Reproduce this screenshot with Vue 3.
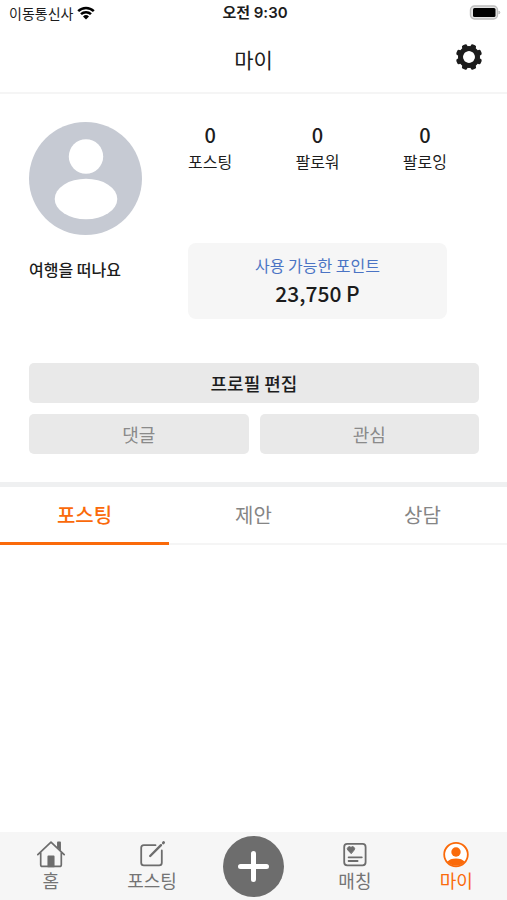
<script setup>
import { ref } from 'vue'

const stats = [
  { label: '포스팅', value: 0 },
  { label: '팔로워', value: 0 },
  { label: '팔로잉', value: 0 },
]
const tabs = ['포스팅', '제안', '상담']
const activeTab = ref('포스팅')
</script>

<template>
  <div class="screen">
    <div class="status">
      <div class="carrier">
        <span>이동통신사</span>
        <svg class="wifi" viewBox="0 0 18 14" aria-hidden="true">
          <path d="M1.2 5.2a11.2 11.2 0 0 1 15.6 0M4 8.2a7.2 7.2 0 0 1 10 0" fill="none" stroke="#000" stroke-width="2.5" />
          <path d="M9 13.6l-3-3.1a4.3 4.3 0 0 1 6 0z" fill="#000" />
        </svg>
      </div>
      <div class="clock">오전 9:30</div>
      <svg class="battery" viewBox="0 0 32 16" aria-hidden="true">
        <rect x="1.5" y="1" width="27" height="13" rx="4" fill="#e4e4e4" stroke="#bdbdbd" stroke-width="1.4" />
        <rect x="4" y="3" width="22.5" height="9" rx="1.5" fill="#000" />
        <path d="M30 6q1.6 1.5 0 3z" fill="#bdbdbd" stroke="#bdbdbd" />
      </svg>
    </div>

    <header class="header">
      <h1>마이</h1>
      <button class="settings" type="button" aria-label="설정">
        <svg viewBox="0 0 28 28" aria-hidden="true">
          <g fill="#1c1c1c">
            <rect v-for="n in 8" :key="n" x="11.2" y="0.8" width="5.6" height="7" rx="1.8" :transform="`rotate(${n * 45 + 22.5} 14 14)`" />
          </g>
          <circle cx="14" cy="14" r="8.5" fill="none" stroke="#1c1c1c" stroke-width="5" />
        </svg>
      </button>
    </header>

    <main>
      <section class="profile">
        <div class="person">
          <svg class="avatar" viewBox="0 0 113 113" aria-hidden="true">
            <circle cx="56.5" cy="56.5" r="56.5" fill="#c6cad3" />
            <circle cx="57" cy="34.5" r="17.2" fill="#fff" />
            <ellipse cx="57" cy="77" rx="31.3" ry="20.3" fill="#fff" />
          </svg>
          <p class="name">여행을 떠나요</p>
        </div>
        <div class="summary">
          <dl class="stats">
            <div v-for="stat in stats" :key="stat.label" class="stat">
              <dt>{{ stat.label }}</dt>
              <dd>{{ stat.value }}</dd>
            </div>
          </dl>
          <div class="points">
            <span class="points-label">사용 가능한 포인트</span>
            <strong class="points-value">23,750 P</strong>
          </div>
        </div>
      </section>

      <div class="actions">
        <button class="action edit" type="button">프로필 편집</button>
        <button class="action" type="button">댓글</button>
        <button class="action" type="button">관심</button>
      </div>

      <div class="tabs" role="tablist">
        <button
          v-for="tab in tabs"
          :key="tab"
          class="tab"
          :class="{ active: tab === activeTab }"
          type="button"
          role="tab"
          :aria-selected="tab === activeTab"
          @click="activeTab = tab"
        >{{ tab }}</button>
      </div>
    </main>

    <nav class="nav">
      <a class="item" href="#home">
        <svg viewBox="0 0 30 28" fill="none" stroke="#6d6d6d" stroke-width="1.7" stroke-linejoin="round" stroke-linecap="round" aria-hidden="true">
          <path d="M1.8 14.6L15 2.2l13.2 12.4M4.7 12.5v12.2q0 1.7 1.7 1.7h17.2q1.7 0 1.7-1.7V12.5" />
          <path d="M21.9 7.5V2.4h2.2v7.5" fill="#6d6d6d" />
          <path d="M12.3 16.4h5.4v10h-5.4z" fill="#6d6d6d" />
        </svg>
        <span>홈</span>
      </a>
      <a class="item" href="#posting">
        <svg viewBox="0 0 30 28" fill="none" stroke="#6d6d6d" stroke-width="1.8" stroke-linecap="round" stroke-linejoin="round" aria-hidden="true">
          <path d="M18.5 5.2H6.8q-2.6 0-2.6 2.6v15q0 2.6 2.6 2.6h15.4q2.6 0 2.6-2.6V10.5" />
          <path d="M13.2 16L24 5.2" stroke-width="2.4" />
          <path d="M26.3 2.9l.3-.3" stroke-width="2.8" />
        </svg>
        <span>포스팅</span>
      </a>
      <button class="add" type="button" aria-label="추가">
        <svg viewBox="0 0 61 61" aria-hidden="true">
          <circle cx="30.5" cy="30.5" r="30.5" fill="#6d6d6d" />
          <path d="M30.5 17.5v26M17.5 30.5h26" stroke="#fff" stroke-width="5" stroke-linecap="round" />
        </svg>
      </button>
      <a class="item" href="#matching">
        <svg viewBox="0 0 30 28" fill="none" stroke="#6d6d6d" stroke-width="1.8" stroke-linecap="round" aria-hidden="true">
          <rect x="4.2" y="3.9" width="21.4" height="21.4" rx="3" />
          <path d="M8.6 17.3h13.2M8.6 21h9" />
          <path d="M11 13.4L7.8 10a1.9 1.9 0 0 1 3.2-2.5A1.9 1.9 0 0 1 14.2 10z" fill="#6d6d6d" stroke-width="1" stroke-linejoin="round" />
        </svg>
        <span>매칭</span>
      </a>
      <a class="item current" href="#my" aria-current="page">
        <svg viewBox="0 0 30 28" aria-hidden="true">
          <circle cx="15" cy="14.6" r="11.8" fill="#fff" stroke="#fa6a0a" stroke-width="1.8" />
          <circle cx="15" cy="12" r="4.7" fill="#fa6a0a" />
          <path d="M6.2 21.8C8 19.6 11 18.4 15 18.4s7 1.2 8.8 3.4a11.6 11.6 0 0 1-17.6 0z" fill="#fa6a0a" />
        </svg>
        <span>마이</span>
      </a>
    </nav>
  </div>
</template>

<style>
body {
  margin: 0;
  background: #fff;
}
</style>

<style scoped>
.screen {
  display: flex;
  flex-direction: column;
  min-height: 100vh;
  color: #1c1c1c;
  font-family: "Noto Sans CJK KR", sans-serif;
}
button {
  padding: 0;
  border: 0;
  background: none;
  color: inherit;
  font: inherit;
  cursor: pointer;
}
svg {
  display: block;
}
.status {
  display: grid;
  grid-template-columns: 1fr auto 1fr;
  align-items: center;
  height: 26px;
  padding: 0 6px 0 9px;
  font-size: 14px;
  line-height: 20px;
}
.carrier {
  display: flex;
  align-items: center;
  gap: 4px;
}
.wifi {
  width: 18px;
  height: 14px;
}
.clock {
  font-family: Inter, "Noto Sans CJK KR", sans-serif;
  font-size: 15px;
  font-weight: 600;
}
.battery {
  width: 32px;
  height: 16px;
  justify-self: end;
}
.header {
  display: grid;
  grid-template-columns: 1fr auto 1fr;
  align-items: center;
  height: 66px;
  padding: 0 24px;
  border-bottom: 2px solid #f5f5f5;
}
h1 {
  grid-column: 2;
  margin: 0;
  font-size: 21px;
  font-weight: 400;
  line-height: 32px;
}
.settings {
  justify-self: end;
  margin-bottom: 4px;
}
.settings svg {
  width: 28px;
  height: 28px;
}
.profile {
  display: flex;
  gap: 46px;
  padding: 28px 60px 0 29px;
}
.avatar {
  width: 113px;
  height: 113px;
}
.name {
  margin: 22px 0 0;
  font-size: 16px;
  font-weight: 500;
  line-height: 24px;
}
.summary {
  flex: 1;
}
.stats {
  display: flex;
  justify-content: space-between;
  margin: 0;
}
.stat {
  display: flex;
  flex-direction: column-reverse;
  align-items: center;
}
.stat dt {
  font-size: 16px;
  line-height: 26px;
}
.stat dd {
  margin: 0;
  font-size: 20px;
  font-weight: 500;
  line-height: 26px;
}
.points {
  display: flex;
  flex-direction: column;
  align-items: center;
  margin-top: 69px;
  padding: 9px 0 11px;
  border-radius: 8px;
  background: #f6f6f6;
}
.points-label {
  color: #4b74c4;
  font-size: 16px;
  line-height: 26px;
}
.points-value {
  font-size: 21px;
  font-weight: 500;
  line-height: 30px;
}
.actions {
  display: grid;
  grid-template-columns: 1fr 1fr;
  gap: 11px;
  padding: 44px 28px 28px 29px;
}
.action {
  height: 40px;
  border-radius: 5px;
  background: #e9e9e9;
  color: #8a8a8a;
  font-size: 18px;
  line-height: 26px;
}
.edit {
  grid-column: 1 / -1;
  color: #1c1c1c;
  font-weight: 500;
}
.tabs {
  display: grid;
  grid-template-columns: repeat(3, 1fr);
  border-top: 5px solid #eff0f1;
  box-shadow: inset 0 -2px #f5f5f5;
}
.tab {
  height: 58px;
  border-bottom: 3px solid transparent;
  color: #858585;
  font-size: 20px;
  line-height: 30px;
}
.tab.active {
  border-color: #fa6a0a;
  color: #fa6a0a;
  font-weight: 500;
}
.nav {
  display: grid;
  grid-template-columns: repeat(5, 1fr);
  justify-items: center;
  height: 68px;
  margin-top: auto;
  background: #f6f6f6;
}
.item {
  display: flex;
  flex-direction: column;
  align-items: center;
  padding-top: 8px;
  color: #747474;
  font-size: 18px;
  line-height: 24px;
  text-decoration: none;
}
.item svg {
  width: 30px;
  height: 28px;
}
.current {
  color: #fa6a0a;
}
.add {
  align-self: center;
}
.add svg {
  width: 61px;
  height: 61px;
}
</style>
